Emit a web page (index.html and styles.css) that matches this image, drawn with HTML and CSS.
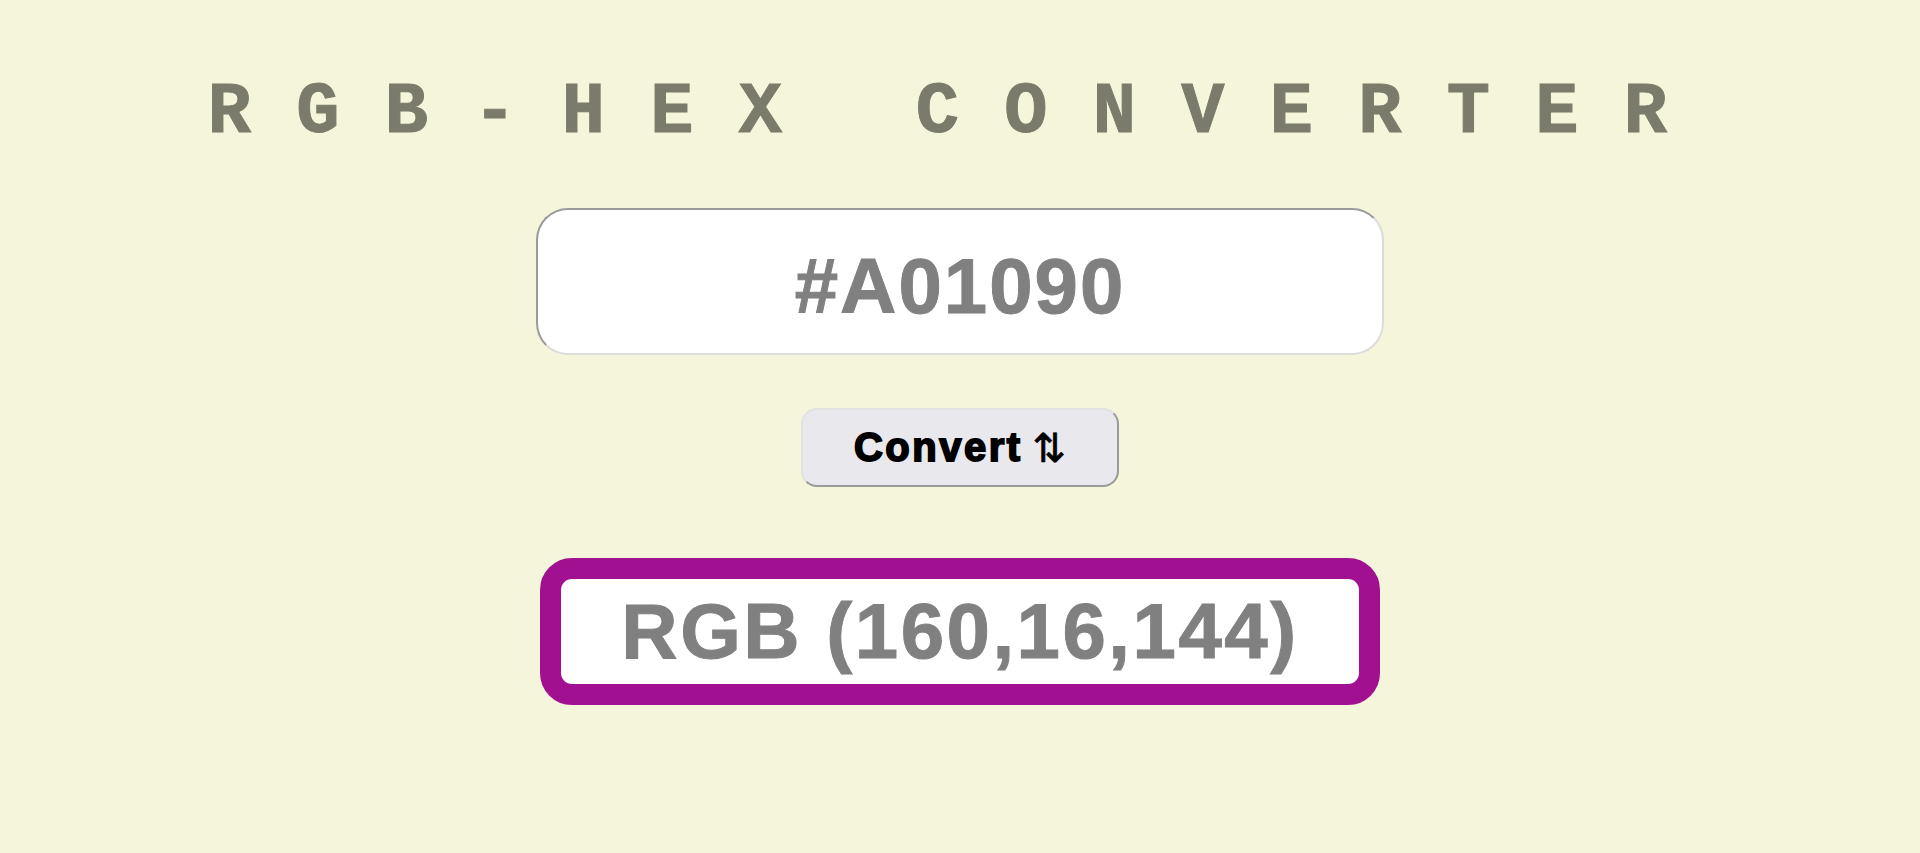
FILE: index.html
```html
<!DOCTYPE html>
<html lang="en">
<head>
<meta charset="utf-8">
<title>RGB-HEX Converter</title>
<link rel="stylesheet" href="styles.css">
</head>
<body>
<main class="app">
  <h1 class="title">RGB-HEX CONVERTER</h1>
  <input class="hex-input" type="text" value="#A01090">
  <button class="convert-btn" type="button">Convert <span class="arrows">⇅</span></button>
  <div class="result">RGB (160,16,144)</div>
</main>
</body>
</html>
```

FILE: styles.css
```css
html, body {
  margin: 0;
  padding: 0;
}

body {
  background: #f5f5dc;
  font-family: "Liberation Sans", Arial, sans-serif;
  min-height: 100vh;
}

.app {
  display: flex;
  flex-direction: column;
  align-items: center;
  padding-top: 78px;
}

.title {
  margin: 0;
  font-family: "Liberation Mono", "Courier New", monospace;
  font-weight: bold;
  font-size: 72px;
  line-height: 70px;
  letter-spacing: 45.3px;
  color: #7b7b6b;
  white-space: pre;
  -webkit-text-stroke: 1px #7b7b6b;
}

.hex-input {
  box-sizing: border-box;
  margin-top: 60px;
  width: 848px;
  height: 147px;
  border: 2px solid;
  border-color: #9a9a9a #dcdcdc #dcdcdc #9a9a9a;
  border-radius: 32px;
  background: #ffffff;
  text-align: center;
  font-family: "Liberation Sans", Arial, sans-serif;
  font-weight: bold;
  font-size: 78px;
  letter-spacing: 2px;
  color: #808080;
  -webkit-text-stroke: 1px #808080;
  outline: none;
  padding: 10px 0 0 0;
}

.convert-btn {
  box-sizing: border-box;
  margin-top: 53px;
  width: 318px;
  height: 79px;
  border: 2px solid;
  border-color: #e2e2e2 #9a9a9a #9a9a9a #e2e2e2;
  border-radius: 16px;
  background: #e9e8ed;
  color: #000000;
  font-family: "Liberation Sans", Arial, sans-serif;
  font-weight: bold;
  font-size: 40px;
  letter-spacing: 2.5px;
  -webkit-text-stroke: 1.8px #000;
  padding: 0;
  display: flex;
  align-items: center;
  justify-content: center;
  gap: 10px;
}

.arrows {
  font-family: "DejaVu Sans", sans-serif;
  font-weight: normal;
  font-size: 40px;
  -webkit-text-stroke: 0.6px #000;
  letter-spacing: 0;
}

.result {
  box-sizing: border-box;
  margin-top: 71px;
  width: 840px;
  height: 147px;
  border: 21px solid #a01090;
  border-radius: 32px;
  background: #ffffff;
  display: flex;
  align-items: center;
  justify-content: center;
  font-weight: bold;
  font-size: 78px;
  letter-spacing: 2.5px;
  color: #808080;
  -webkit-text-stroke: 1px #808080;
}
```
